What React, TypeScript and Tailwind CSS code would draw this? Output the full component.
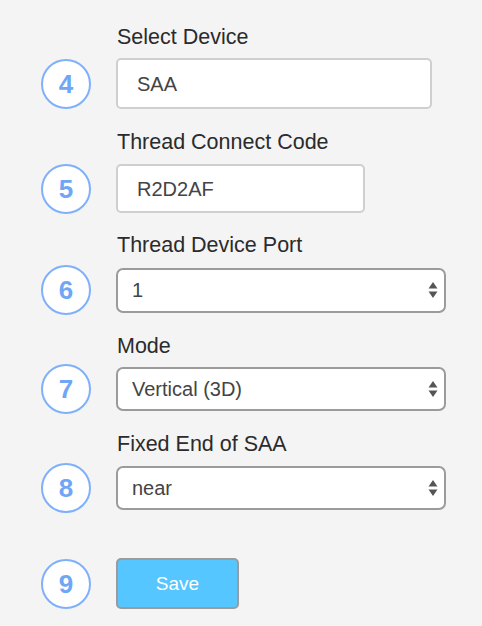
import React from "react";

const font = { fontFamily: '"Liberation Sans", Arial, Helvetica, sans-serif' };

function Circle({ n }: { n: number }) {
  return (
    <div className="w-[50px] h-[50px] shrink-0 rounded-full border-[2.5px] border-[#7eb0fb] bg-white flex items-center justify-center">
      <span className="text-[26px] font-bold text-[#6fa6f6] leading-none">{n}</span>
    </div>
  );
}

function Arrows() {
  return (
    <svg width="10" height="20" viewBox="0 0 10 20" className="shrink-0">
      <path d="M5 2 L9.5 8.5 L0.5 8.5 Z" fill="#555" />
      <path d="M5 18 L9.5 11.5 L0.5 11.5 Z" fill="#555" />
    </svg>
  );
}

function Label({ text, className }: { text: string; className: string }) {
  return (
    <div className={`ml-[117px] h-[24px] leading-[24px] text-[21.5px] text-[#2b2b2b] ${className}`}>
      {text}
    </div>
  );
}

function TextBox({ value, w, h }: { value: string; w: string; h: string }) {
  return (
    <div
      className={`${w} ${h} bg-white border-2 border-[#cfcfcf] rounded-[5px] flex items-center pl-[19px] text-[20px] text-[#444]`}
    >
      {value}
    </div>
  );
}

function SelectBox({ value, h }: { value: string; h: string }) {
  return (
    <div
      className={`w-[330px] ${h} bg-white border-2 border-[#9b9b9b] rounded-[7px] flex items-center justify-between pl-[14px] pr-[6px] text-[20px] text-[#444]`}
    >
      <span>{value}</span>
      <Arrows />
    </div>
  );
}

export default function App() {
  return (
    <div className="w-[482px] h-[626px] bg-[#f4f4f4] overflow-hidden" style={font}>
      <div className="pt-[25px]">
        <Label text="Select Device" className="" />
        <div className="mt-[9px] h-[51px] flex items-center pl-[41px] gap-[25px]">
          <Circle n={4} />
          <TextBox value="SAA" w="w-[316px]" h="h-[51px]" />
        </div>

        <Label text="Thread Connect Code" className="mt-[21px]" />
        <div className="mt-[10px] h-[49px] flex items-center pl-[41px] gap-[25px]">
          <Circle n={5} />
          <TextBox value="R2D2AF" w="w-[249px]" h="h-[49px]" />
        </div>

        <Label text="Thread Device Port" className="mt-[20px]" />
        <div className="mt-[8px] h-[50px] flex items-center pl-[41px] gap-[25px]">
          <Circle n={6} />
          <SelectBox value="1" h="h-[45px]" />
        </div>

        <Label text="Mode" className="mt-[19px]" />
        <div className="mt-[7px] h-[48px] flex items-center pl-[41px] gap-[25px]">
          <Circle n={7} />
          <SelectBox value="Vertical (3D)" h="h-[44px]" />
        </div>

        <Label text="Fixed End of SAA" className="mt-[19px]" />
        <div className="mt-[7px] h-[50px] flex items-center pl-[41px] gap-[25px]">
          <Circle n={8} />
          <SelectBox value="near" h="h-[44px]" />
        </div>

        <div className="mt-[45px] h-[51px] flex items-center pl-[41px] gap-[25px]">
          <Circle n={9} />
          <div className="w-[123px] h-[51px] bg-[#55c6ff] border-2 border-[#9b9b9b] rounded-[5px] flex items-center justify-center pt-[2px] text-[19px] text-white">
            Save
          </div>
        </div>
      </div>
    </div>
  );
}
